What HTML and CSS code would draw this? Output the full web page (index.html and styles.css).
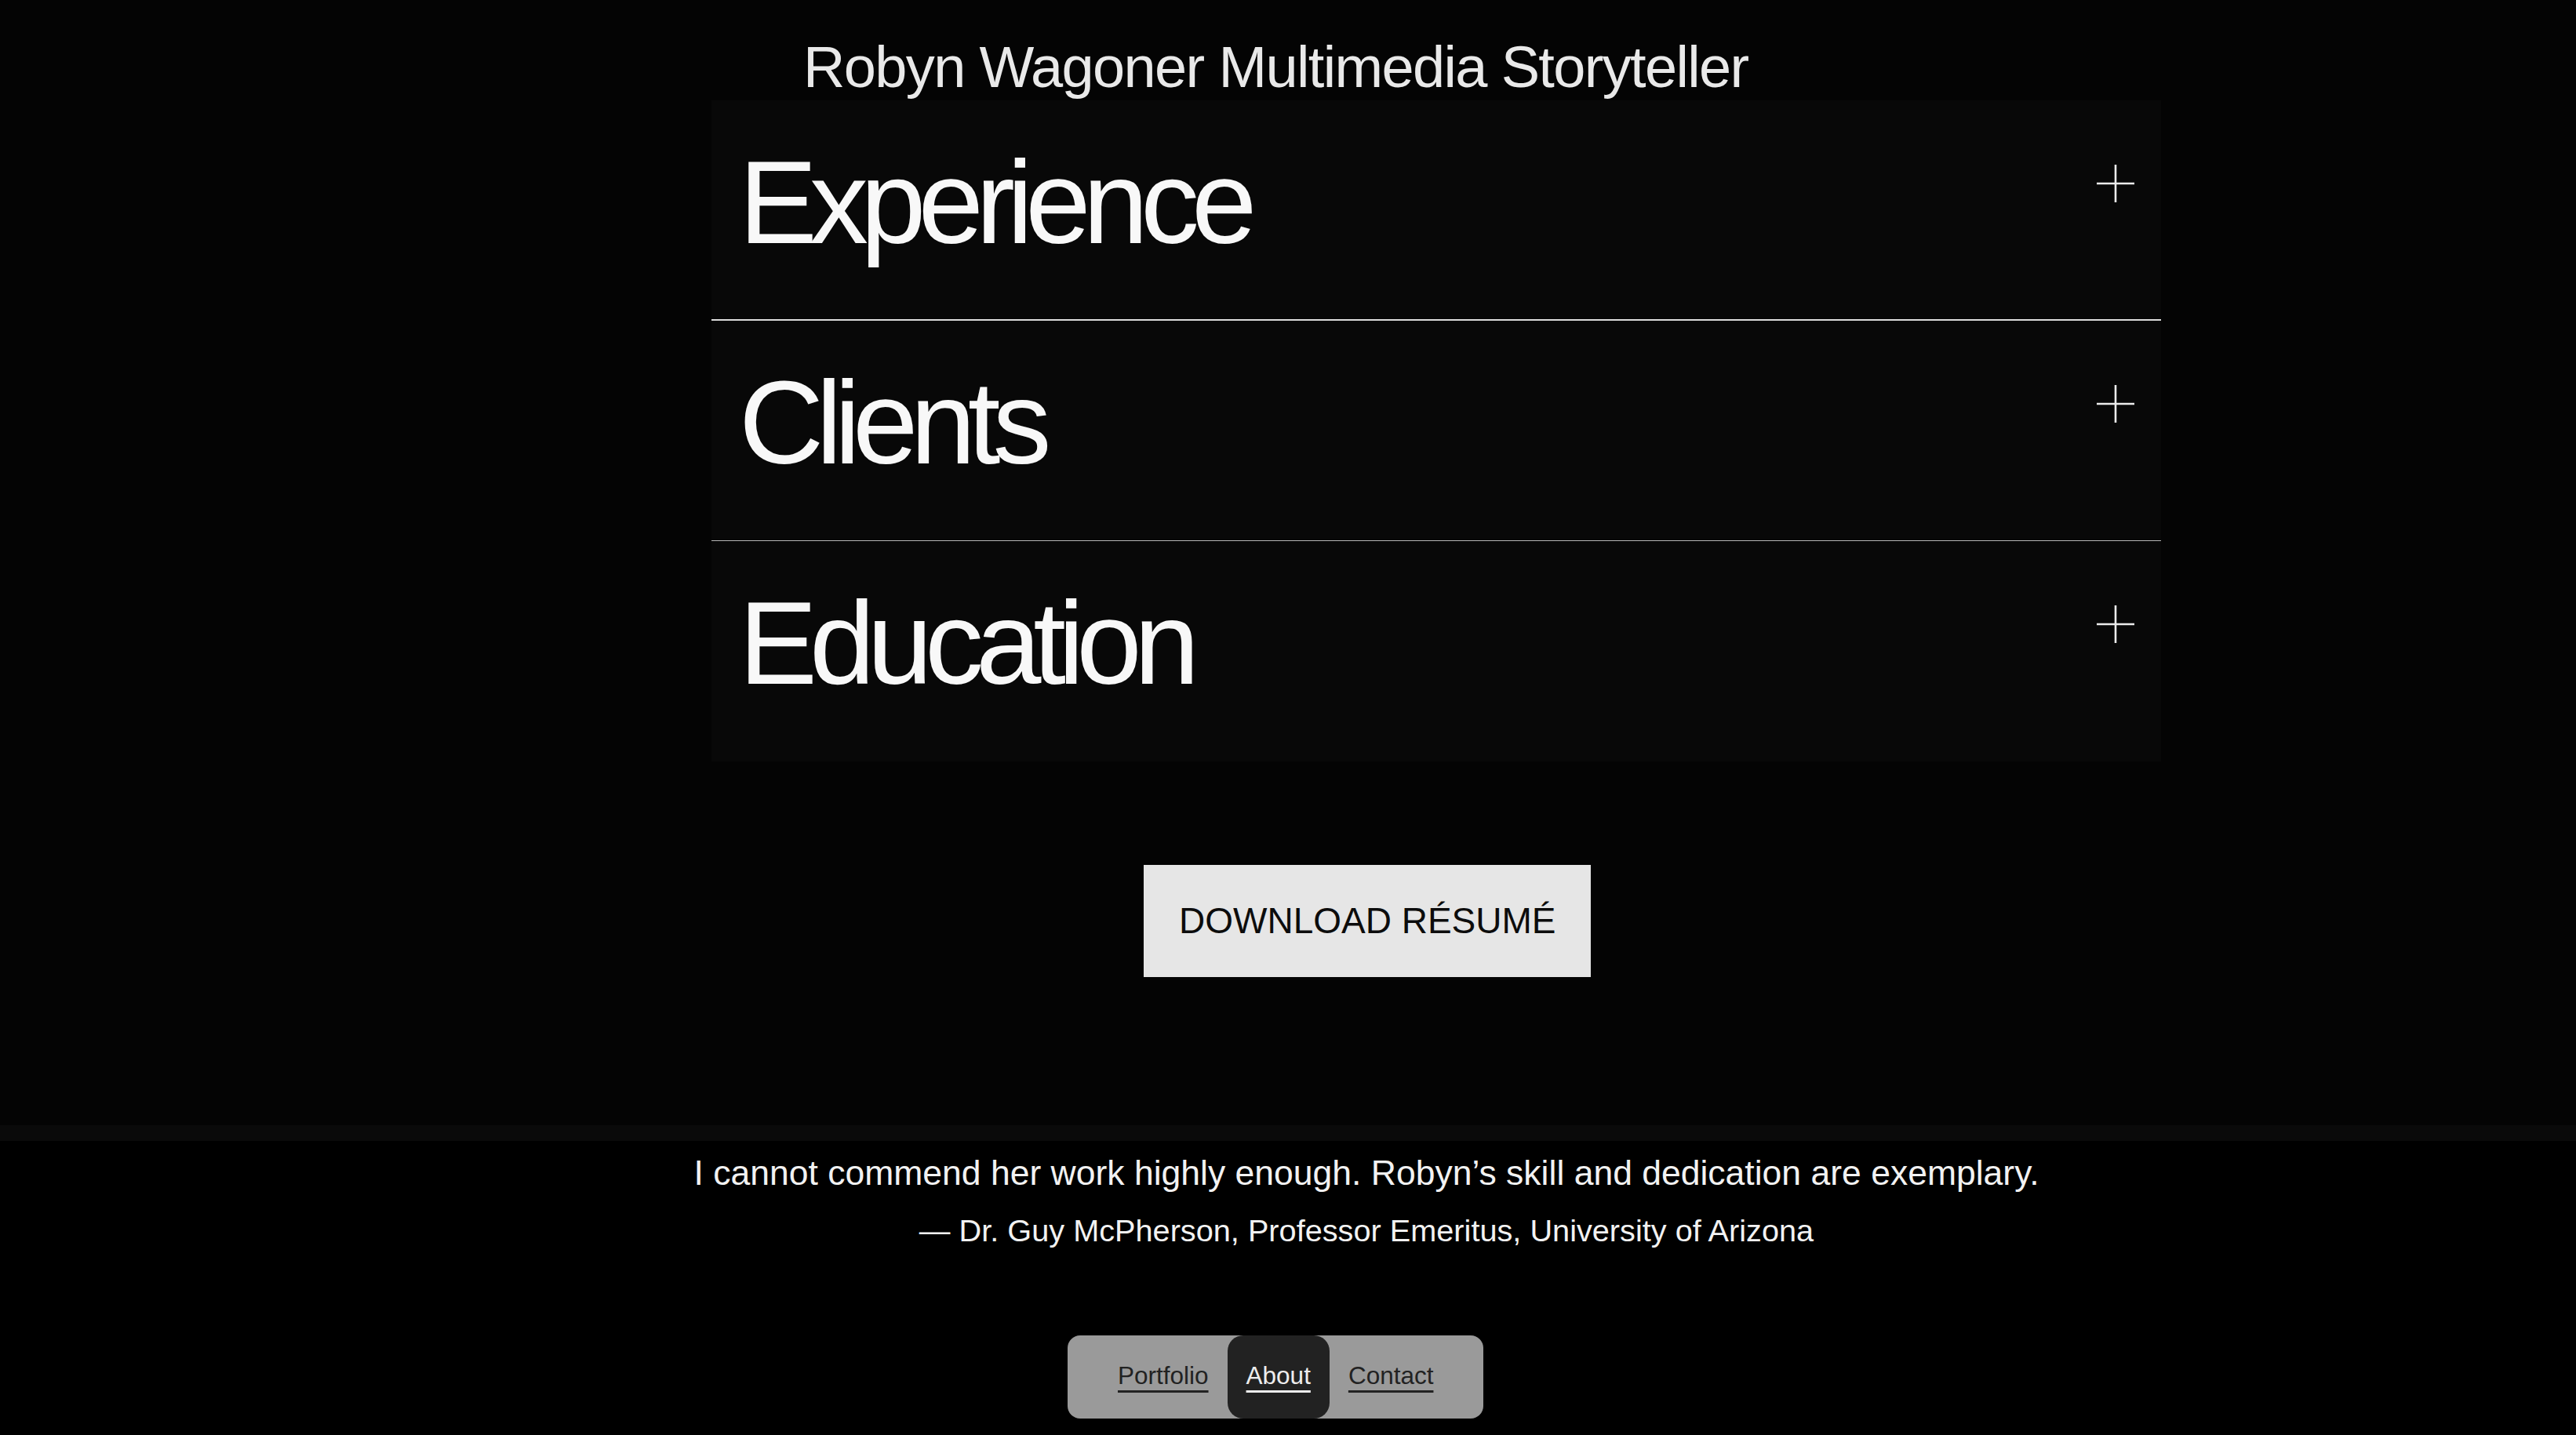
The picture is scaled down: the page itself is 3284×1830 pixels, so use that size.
FILE: index.html
```html
<!DOCTYPE html>
<html lang="en">
<head>
<meta charset="utf-8">
<title>Robyn Wagoner Multimedia Storyteller — About</title>
<link rel="stylesheet" href="styles.css">
</head>
<body>
<main class="page">
  <h1 class="title">Robyn Wagoner Multimedia Storyteller</h1>
  <section class="accordion">
    <div class="acc-row acc-row--first">
      <h2 class="acc-title">Experience</h2>
      <svg class="plus" viewBox="0 0 48 48" aria-hidden="true"><path d="M24 0V48M0 24H48"/></svg>
    </div>
    <div class="acc-row">
      <h2 class="acc-title">Clients</h2>
      <svg class="plus" viewBox="0 0 48 48" aria-hidden="true"><path d="M24 0V48M0 24H48"/></svg>
    </div>
    <div class="acc-row acc-row--last">
      <h2 class="acc-title">Education</h2>
      <svg class="plus" viewBox="0 0 48 48" aria-hidden="true"><path d="M24 0V48M0 24H48"/></svg>
    </div>
  </section>
  <div class="cta">
    <a class="btn" href="#">DOWNLOAD RÉSUMÉ</a>
  </div>
</main>
<div class="strip"></div>
<footer class="footer">
  <blockquote class="quote">
    <p class="quote-text">I cannot commend her work highly enough. Robyn’s skill and dedication are exemplary.</p>
    <p class="quote-cite">— Dr. Guy McPherson, Professor Emeritus, University of Arizona</p>
  </blockquote>
  <nav class="nav">
    <a class="nav-link" href="#">Portfolio</a>
    <a class="nav-link nav-link--active" href="#">About</a>
    <a class="nav-link" href="#">Contact</a>
  </nav>
</footer>
</body>
</html>
```
FILE: styles.css
```css
html, body {
  margin: 0;
  padding: 0;
}
body {
  background: #000;
  color: #f2f2f2;
  font-family: "Liberation Sans", Arial, Helvetica, sans-serif;
}
.page {
  background: #040404;
  height: 1435px;
  box-sizing: border-box;
  padding-top: 43px;
}
.title {
  margin: 0 0 0 1024px;
  font-size: 74px;
  font-weight: 400;
  line-height: normal;
  letter-spacing: -1.65px;
  color: #e9e9e9;
}
.accordion {
  margin-left: 907px;
  width: 1848px;
  background: #080808;
}
.acc-row {
  display: flex;
  justify-content: space-between;
  align-items: flex-start;
  box-sizing: border-box;
  height: 281px;
  padding: 0 34px 0 35px;
  border-bottom: 1px solid #b5b5b5;
}
.acc-row--first {
  height: 281px;
  border-bottom: 2px solid #dcdcdc;
}
.acc-row--last {
  border-bottom: none;
}
.acc-title {
  margin: 55px 0 0 0;
  font-size: 150px;
  font-weight: 400;
  line-height: 150px;
  letter-spacing: -10px;
  color: #f8f8f8;
}
.plus {
  width: 48px;
  height: 48px;
  margin-top: 82px;
  stroke: #ececec;
  stroke-width: 2.6;
  fill: none;
  flex: none;
}
.cta {
  margin-top: 132px;
  padding-left: 1458px;
}
.btn {
  display: inline-block;
  background: #e6e6e6;
  color: #0c0c0c;
  text-decoration: none;
  font-size: 46px;
  line-height: 53px;
  padding: 45px 45px;
}
.strip {
  height: 20px;
  background: #0a0a0a;
}
.footer {
  height: 375px;
  background: #000;
  padding-top: 16px;
  box-sizing: border-box;
}
.quote {
  margin: 0;
  padding-left: 200px;
  text-align: center;
}
.quote-text {
  margin: 0;
  font-size: 44.5px;
  line-height: normal;
  color: #f2f2f2;
}
.quote-cite {
  margin: 26px 0 0 0;
  font-size: 39.7px;
  line-height: normal;
  color: #f2f2f2;
}
.nav {
  display: inline-flex;
  margin: 111px 0 0 1361px;
  height: 106px;
  padding: 0 40px;
  background: #9a9a9a;
  border-radius: 16px;
}
.nav-link {
  display: block;
  padding: 33px 24px 0;
  font-size: 31.5px;
  line-height: normal;
  color: #222;
  text-decoration: underline;
  text-decoration-thickness: 3px;
  text-underline-offset: 8px;
  border-radius: 20px;
}
.nav-link--active {
  background: #222;
  color: #ededed;
}
```
